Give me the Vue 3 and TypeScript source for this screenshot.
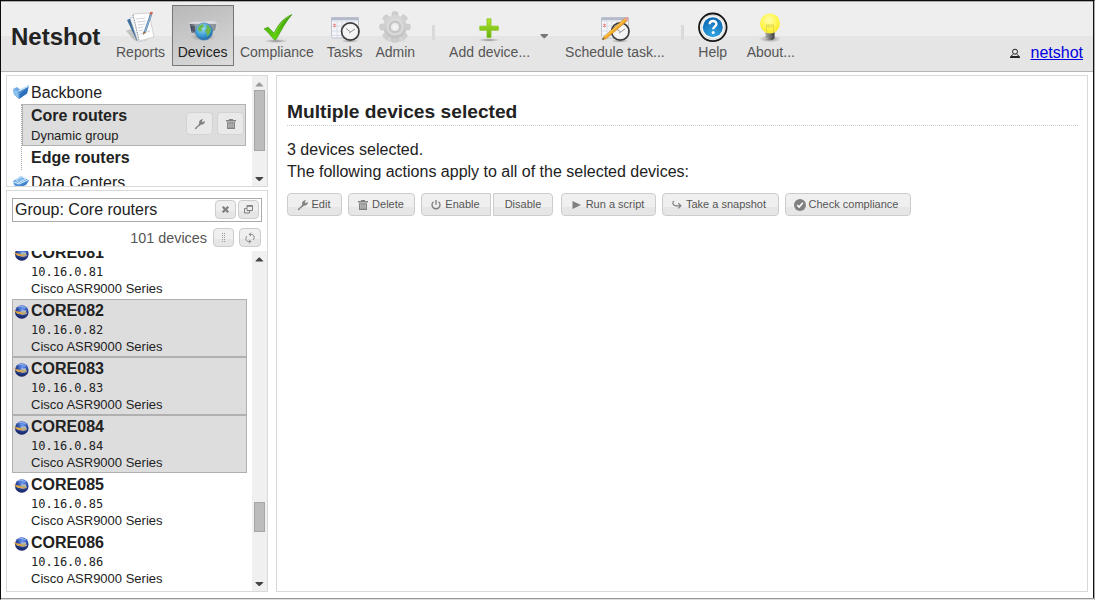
<script setup lang="ts">
interface Device { name: string; ip: string; model: string; selected: boolean }

const devices: Device[] = [81, 82, 83, 84, 85, 86].map((n) => ({
  name: `CORE0${n}`,
  ip: `10.16.0.${n}`,
  model: 'Cisco ASR9000 Series',
  selected: n >= 82 && n <= 84,
}))

const glyphs: Record<string, string> = {
  wrench: 'M1 10 L5.2 6 C4.6 3.3 6.4 1 9 1.3 L7.7 3.2 L8.8 4.2 L10.8 2.8 C11.3 5.2 9.2 7.1 6.9 6.6 L5.7 8 L4.6 8 L4.4 9.2 L3.2 9.2 L2.6 10.8 C1.6 11.6 .5 10.9 1 10Z',
  trash: 'M4 1H8V2H11V3.4H1V2H4ZM2 4.2H10V11H2ZM3.5 5.3V9.8H4.3V5.3ZM5.6 5.3V9.8H6.4V5.3ZM7.7 5.3V9.8H8.5V5.3Z',
  play: 'M1.5 2 L10 6 L1.5 10Z',
}

const actions = [
  { cls: 'edit', label: 'Edit', icon: 'wrench' },
  { cls: 'delete', label: 'Delete', icon: 'trash' },
  { cls: 'enable', label: 'Enable', icon: 'power' },
  { cls: 'disable', label: 'Disable', icon: '' },
  { cls: 'run', label: 'Run a script', icon: 'play' },
  { cls: 'snapshot', label: 'Take a snapshot', icon: 'arrow' },
  { cls: 'check', label: 'Check compliance', icon: 'check' },
]

const tools = [
  { id: 'reports', label: 'Reports' },
  { id: 'devices', label: 'Devices' },
  { id: 'compliance', label: 'Compliance' },
  { id: 'tasks', label: 'Tasks' },
  { id: 'admin', label: 'Admin' },
  { id: 'add', label: 'Add device...' },
  { id: 'schedule', label: 'Schedule task...' },
  { id: 'help', label: 'Help' },
  { id: 'about', label: 'About...' },
]
const teeth = [0, 45, 90, 135, 180, 225, 270, 315]
</script>

<template>
  <div class="window">
    <svg class="defs" width="0" height="0">
      <defs>
        <linearGradient id="gGreen" x1="0" y1="0" x2="0" y2="1"><stop offset="0" stop-color="#b4e62a" /><stop offset="1" stop-color="#63b010" /></linearGradient>
        <linearGradient id="gTick" x1="0" y1="0" x2="0" y2="1"><stop offset="0" stop-color="#3f9a06" /><stop offset="1" stop-color="#62d60c" /></linearGradient>
        <linearGradient id="gGear" x1="0" y1="0" x2="0" y2="1"><stop offset="0" stop-color="#d8d8d8" /><stop offset="1" stop-color="#c2c2c2" /></linearGradient>
        <linearGradient id="gFold" x1="0" y1="0" x2="1" y2="1"><stop offset="0" stop-color="#8cc4f4" /><stop offset="1" stop-color="#1c63b8" /></linearGradient>
        <linearGradient id="gBox" x1="0" y1="0" x2="1" y2="0"><stop offset="0" stop-color="#4e5664" /><stop offset=".3" stop-color="#a8adb5" /><stop offset="1" stop-color="#8b8f96" /></linearGradient>
        <radialGradient id="gGlobe" cx=".4" cy=".3" r=".7"><stop offset="0" stop-color="#a4e0f6" /><stop offset=".6" stop-color="#3f9fd8" /><stop offset="1" stop-color="#1f6aa8" /></radialGradient>
        <radialGradient id="gHelp" cx=".5" cy=".9" r=".9"><stop offset="0" stop-color="#35a8e4" /><stop offset="1" stop-color="#0b65ae" /></radialGradient>
        <radialGradient id="gBulb" cx=".45" cy=".35" r=".65"><stop offset="0" stop-color="#fffcae" /><stop offset=".65" stop-color="#fff64b" /><stop offset="1" stop-color="#f8e82a" /></radialGradient>
        <linearGradient id="gBase" x1="0" y1="0" x2="1" y2="0"><stop offset="0" stop-color="#b9b9b3" /><stop offset="1" stop-color="#303030" /></linearGradient>
        <radialGradient id="gOrb" cx=".55" cy=".25" r=".75"><stop offset="0" stop-color="#6f9ff5" /><stop offset=".5" stop-color="#2c4da8" /><stop offset="1" stop-color="#15205a" /></radialGradient>
        <radialGradient id="gShade"><stop offset="0" stop-color="#555" stop-opacity=".65" /><stop offset="1" stop-color="#777" stop-opacity="0" /></radialGradient>
      </defs>
    </svg>

    <header class="toolbar">
      <h1>Netshot</h1>
      <template v-for="t in tools" :key="t.id">
        <span v-if="t.id === 'add' || t.id === 'help'" class="divider" :class="'before-' + t.id"></span>
        <a class="tool" :class="[t.id, { active: t.id === 'devices' }]">
          <svg width="32" height="32" viewBox="0 0 32 32">
            <g v-if="t.id === 'reports'">
              <path d="M1 20L8 17L15 31L9 29Z" fill="#999" opacity=".5" />
              <path d="M2 9L9 6L15 29L12 30Z" fill="#3b6c99" />
              <path d="M5 7L16 4L22 29L13 31Z" fill="#f5f5f5" stroke="#b7bfc8" stroke-width=".6" />
              <path d="M8 3L24 2L29 26L14 30Z" fill="#fdfdfd" stroke="#c4c4c4" stroke-width=".7" />
              <path d="M11 8L20 7M12 11L21 10M13 14L20 13M13 17L18 16M14 20L18 19M15 23L25 20" stroke="#cdd0d5" stroke-width=".9" />
              <path d="M8 4L14 29" stroke="#82909f" stroke-width="1" stroke-dasharray="1 1.5" />
              <path d="M25 3L18 23L21 21L27 4Z" fill="#527fa8" /><path d="M26 4L19.5 22" stroke="#b0d0ea" stroke-width=".7" />
              <path d="M24.5 3L25.5 .8L28 1.3L27 4Z" fill="#c66851" /><path d="M18.5 20.5L18 24L21 21.5Z" fill="#9a6d40" />
            </g>
            <g v-else-if="t.id === 'devices'">
              <ellipse cx="16" cy="26" rx="13" ry="4" fill="url(#gShade)" />
              <path d="M4 11L27 10L30 12.5L2 13.5Z" fill="#dcdee1" />
              <path d="M2 12.5L30 12.5L28.5 20L14 25L4 22Z" fill="url(#gBox)" stroke="#e3e4e7" stroke-width=".7" />
              <path d="M5 15V20M7 15V21" stroke="#252c45" stroke-width="1" />
              <circle cx="17" cy="20.5" r="8.6" fill="url(#gGlobe)" stroke="#447ca9" stroke-width=".6" />
              <path d="M12 15L16 13L17 15.5L14.5 17.5L15 20L12.5 20.5L10.5 18.5ZM19 14L22 15L24 18L23 22L20.5 26L19.5 22L18 20L20 17Z" fill="#6cb84a" />
            </g>
            <g v-else-if="t.id === 'compliance'">
              <ellipse cx="15" cy="30" rx="12" ry="2" fill="url(#gShade)" />
              <path d="M3 18L7 16L13 22C17 14 22 7 31 3.5C24.5 11 20.5 19 15.5 28Q14 29.5 12.5 28C9 24 6 20 3 18Z" fill="url(#gTick)" stroke="#338d08" stroke-width=".5" />
              <path d="M28 5C20 11 17 17 13.3 23" stroke="#8ade47" stroke-width=".8" fill="none" />
            </g>
            <g v-else-if="t.id === 'tasks' || t.id === 'schedule'">
              <rect x="2.5" y="7" width="27" height="20" rx="1.5" fill="#f4f5f9" stroke="#bec3ce" />
              <path d="M2.2 6.2H29.8V9.2H2.2Z" fill="#b4bac9" />
              <path d="M3 10H29M3 15H29M3 20H28M3 24.5H20M8 10V27M13 10V27M18 10V26M23 10V23" stroke="#d3d8e4" stroke-width=".8" />
              <path d="M4 13L7 16M7 13L4 16M5.5 12.5V16.5" stroke="#f08078" stroke-width=".8" />
              <ellipse cx="21" cy="30" rx="9" ry="1.7" fill="url(#gShade)" />
              <circle cx="21.3" cy="20.5" r="8.7" fill="#f5f5f5" stroke="#3d3d3d" stroke-width="1.7" />
              <circle cx="21.3" cy="20.5" r="7.2" fill="none" stroke="#c2c2c2" stroke-width=".7" stroke-dasharray=".7 3" />
              <path d="M17 17.5L21.5 21L26 18M21.5 21L20 22.2" stroke="#777" stroke-width=".8" fill="none" />
              <template v-if="t.id === 'schedule'">
                <path d="M3 29L5 25.5L25.5 7.5L28 10L7.5 27.6Z" fill="#f2a929" stroke="#b97812" stroke-width=".5" />
                <path d="M6 25.5L26 8.5" stroke="#ffd468" stroke-width=".9" />
                <path d="M25.2 7.7L27 6Q30 6 29.5 9L28 10Z" fill="#e9a195" /><path d="M3 29L4.3 26.5L5.7 28Z" fill="#665" />
              </template>
            </g>
            <g v-else-if="t.id === 'admin'">
              <ellipse cx="16" cy="29" rx="12" ry="3" fill="url(#gShade)" opacity=".4" />
              <rect v-for="a in teeth" :key="a" x="13" y=".8" width="6" height="8" rx="1.7" fill="#cfcfcf" stroke="#bdbdbd" stroke-width=".5" :transform="`rotate(${a} 16 16)`" />
              <circle cx="16" cy="16" r="11.8" fill="url(#gGear)" />
              <circle cx="16" cy="16" r="7.6" fill="#cacaca" stroke="#dedede" stroke-width="1.5" />
              <circle cx="16" cy="16" r="4.8" fill="#e7e7e7" stroke="#b8b8b8" stroke-width=".8" /><circle cx="16" cy="16" r="2.7" fill="#f2f2f2" />
            </g>
            <g v-else-if="t.id === 'add'">
              <ellipse cx="15" cy="29" rx="11" ry="1.8" fill="url(#gShade)" />
              <path d="M13 7.8H17V15.2H24.3V19.2H17V26.5H13V19.2H5.8V15.2H13Z" fill="url(#gGreen)" stroke="#83c61a" stroke-width=".8" />
            </g>
            <g v-else-if="t.id === 'help'">
              <circle cx="15.8" cy="16.3" r="13.8" fill="#fafafa" stroke="#161616" stroke-width="1.8" />
              <circle cx="15.8" cy="16.3" r="12" fill="none" stroke="#ccc" stroke-width=".8" />
              <circle cx="15.8" cy="16.3" r="10" fill="url(#gHelp)" />
              <path d="M12.7 13.2C12.7 9 19.4 9 19.4 13C19.4 15.7 16.2 15.5 16.2 18.2" fill="none" stroke="#fff" stroke-width="2.4" /><circle cx="16.2" cy="21.4" r="1.5" fill="#fff" />
            </g>
            <g v-else>
              <ellipse cx="15" cy="28" rx="11" ry="3.6" fill="url(#gShade)" />
              <path d="M10.5 20H19.5V27Q18 30 12.5 29L10.5 27Z" fill="url(#gBase)" />
              <path d="M10.5 23H19.5M10.5 25.5H19.5" stroke="#777" stroke-width=".6" />
              <circle cx="15" cy="12.4" r="10" fill="url(#gBulb)" />
              <path d="M11.5 21V14H18.5V21M13 14V16H17V14" fill="none" stroke="#d4cb46" stroke-width=".7" />
            </g>
          </svg>
          <span class="label">{{ t.label }}</span>
        </a>
        <svg v-if="t.id === 'add'" class="caret" width="9" height="5" viewBox="0 0 9 5"><path d="M.5 0H8V1L4.8 4.2H3.8L.5 1Z" fill="#777" /></svg>
      </template>
      <div class="user">
        <svg width="12" height="12" viewBox="0 0 12 12"><circle cx="6" cy="4.7" r="2.5" fill="none" stroke="#222" stroke-width="1" /><path d="M2 9L4.3 7.3M10 9L7.7 7.3" stroke="#222" stroke-width=".9" /><path d="M1 11V9.5L2.5 8.9H9.5L11 9.5V11Z" fill="#222" /></svg>
        <a class="account">netshot</a>
      </div>
    </header>

    <div class="body">
      <aside>
        <section class="panel groups">
          <div class="tree">
            <div class="folder">
              <svg width="17" height="16" viewBox="0 0 17 16"><path d="M0 5L4 3L7 5.5L16 1L14 9.5L6 15L1 10.5Z" fill="url(#gFold)" /><path d="M0 5.2L5 7L6 14.5L1 10.5Z" fill="#8ac0ee" /><path d="M5.5 7L15.5 1.8" stroke="#d8edfc" stroke-width="1.3" fill="none" /><path d="M7 9.5L15.5 3L14 9.5L6.5 14.5Z" fill="#2467b4" opacity=".75" /></svg>
              <span>Backbone</span>
            </div>
            <div class="children">
              <div class="group selected">
                <div><b>Core routers</b><small>Dynamic group</small></div>
                <span class="row-actions">
                  <button><svg width="12" height="12" viewBox="0 0 12 12"><path :d="glyphs.wrench" /></svg></button>
                  <button><svg width="12" height="12" viewBox="0 0 12 12"><path :d="glyphs.trash" fill-rule="evenodd" /></svg></button>
                </span>
              </div>
              <div class="group plain"><b>Edge routers</b></div>
            </div>
            <div class="folder second">
              <svg width="17" height="16" viewBox="0 0 17 16"><path d="M0 7L8 2L16 6.5L13 11L5 14L1 11Z" fill="url(#gFold)" /><path d="M3 5.5L9 2.5L13 5L5.5 8.5ZM1 8L6 10L15 6" stroke="#d5ebfd" stroke-width="1" fill="#83b9eb" /></svg>
              <span>Data Centers</span>
            </div>
          </div>
          <div class="scroll">
            <svg width="9" height="5" viewBox="0 0 9 5"><path d="M.5 4.5H8.2V4L4.8 .6H3.8L.5 4Z" fill="#999" /></svg>
            <i class="thumb top-thumb"></i>
            <svg class="down" width="9" height="5" viewBox="0 0 9 5"><path d="M.5 0H8.2V.8L4.8 4H3.8L.5 .8Z" fill="#444" /></svg>
          </div>
        </section>

        <section class="panel list-panel">
          <div class="search">
            <span>Group: Core routers</span>
            <button><svg width="9" height="9" viewBox="0 0 9 9"><path d="M1.7 1.7L7.3 7.3M7.3 1.7L1.7 7.3" stroke="#808080" stroke-width="2.3" /></svg></button>
            <button><svg width="11" height="9" viewBox="0 0 11 9"><path d="M4 .5H9.5V5.5H4ZM3.5 3.5H1.5V8H6.5V6M4 1.3H9.5" fill="none" stroke="#808080" stroke-width="1" /></svg></button>
          </div>
          <div class="count">
            <span>101 devices</span>
            <button><svg width="5" height="10" viewBox="0 0 5 10" shape-rendering="crispEdges"><path d="M1.5 0V9M3.5 0V9" stroke="#999" stroke-width="1" stroke-dasharray="1 1" /></svg></button>
            <button><svg width="12" height="12" viewBox="0 0 12 12"><path d="M5.5 2.5H7.5C10.2 2.5 11 6 9 8M6.5 9.5H4.5C1.8 9.5 1 6 3 4M7 .7L5.2 2.5L7 4.3M5 7.7L6.8 9.5L5 11.3" fill="none" stroke="#808080" stroke-width="1" /></svg></button>
          </div>
          <div class="viewport">
            <ul>
              <li v-for="d in devices" :key="d.name" :class="{ selected: d.selected }">
                <svg width="16" height="16" viewBox="0 0 16 16"><circle cx="8.8" cy="8" r="6.8" fill="url(#gOrb)" /><path d="M5 3Q9 1 13 4" stroke="#a4c0f5" stroke-width=".8" fill="none" /><path d="M3 8L13 7L14 10L10 11L4 9.5Z" fill="#b6aa82" /><path d="M0 6.5L5 7.5L11 10L5 9.8Z" fill="#e5a43d" /><path d="M8 7H13" stroke="#e5e6e4" stroke-width=".8" /></svg>
                <div><b>{{ d.name }}</b><code>{{ d.ip }}</code><small>{{ d.model }}</small></div>
              </li>
            </ul>
            <div class="scroll">
              <svg width="9" height="5" viewBox="0 0 9 5"><path d="M.5 4.5H8.2V4L4.8 .6H3.8L.5 4Z" fill="#444" /></svg>
              <i class="thumb list-thumb"></i>
              <svg class="down" width="9" height="5" viewBox="0 0 9 5"><path d="M.5 0H8.2V.8L4.8 4H3.8L.5 .8Z" fill="#444" /></svg>
            </div>
          </div>
        </section>
      </aside>

      <main class="panel">
        <h2>Multiple devices selected</h2>
        <p>3 devices selected.<br>The following actions apply to all of the selected devices:</p>
        <div class="actions">
          <button v-for="a in actions" :key="a.label" :class="a.cls">
            <svg v-if="a.icon" width="12" height="12" viewBox="0 0 12 12">
              <g v-if="a.icon === 'power'" fill="none" stroke="#808080" stroke-width="1.4"><path d="M3.5 2.7A4 4 0 1 0 8.5 2.7M6 1V5.8" /></g>
              <g v-else-if="a.icon === 'arrow'" fill="none" stroke="#808080" stroke-width="1.2"><path d="M3 2C1 3 1.5 6.8 5 6.8H9.5M7.3 4.2L9.9 6.8L7.3 9.4" /></g>
              <g v-else-if="a.icon === 'check'"><circle cx="6" cy="6" r="6" fill="#808080" /><path d="M3.2 6.2L5.2 8.1L8.8 3.8" fill="none" stroke="#fff" stroke-width="1.6" /></g>
              <path v-else :d="glyphs[a.icon]" fill-rule="evenodd" />
            </svg>
            <span>{{ a.label }}</span>
          </button>
        </div>
      </main>
    </div>
  </div>
</template>

<style>
body { margin: 0; background: #fff; overflow: hidden; }
</style>

<style scoped>
* { box-sizing: border-box; }
.window { width: 1095px; height: 600px; display: flex; flex-direction: column; border-left: 1px solid #0c0c0c; border-top: 1px solid #0c0c0c; border-right: 1px solid #aaa; font: 16px/18px "Liberation Sans", Arial, sans-serif; color: #222; overflow: hidden; box-shadow: inset -1px 0 #111; border-bottom: 1px solid #ddd; position: relative; }
.defs { position: absolute; }
svg { display: block; flex: none; }
.toolbar { height: 71px; flex: none; margin-right: 1px; display: flex; align-items: flex-start; background: linear-gradient(#eee 34px, #e5e5e5 34px); border-top: 1px solid #aaa; border-bottom: 1px solid #b5b5b5; }
h1 { margin: 21px 0 0 10px; width: 99px; font-size: 24px; line-height: 28px; }
.tool { height: 61px; margin-top: 3px; padding: 5px 5px 0; border: 1px solid transparent; display: flex; flex-direction: column; align-items: center; font-size: 14px; line-height: 16px; color: #555; white-space: nowrap; }
.label { margin-top: 1px; }
.active { color: #222; background: linear-gradient(160deg, #b8b8b8, #dcdcdc); border-color: #777; }
.devices { margin-left: .7px; }
.compliance { margin-left: .4px; }
.tasks, .admin { margin-left: .9px; }
.divider { width: 3px; height: 15px; margin-top: 23px; background: #dadada; }
.before-add { margin-left: 11px; margin-right: 8px; }
.before-help { margin-left: 10px; margin-right: 7px; }
.caret { margin-top: 32px; margin-left: 4px; margin-right: 10px; }
.about { margin-left: 6px; }
.user { margin: 42px 10px 0 auto; display: flex; align-items: center; gap: 10px; }
.account { color: #0000e0; text-decoration: underline; }
.body { flex: 1; min-height: 0; display: flex; gap: 8px; padding: 3px 6px 6px 5px; border-bottom: 1px solid #999; }
aside { width: 262px; display: flex; flex-direction: column; gap: 3px; }
.panel { background: #fff; border: 1px solid #d9d9d9; }
.groups { height: 112px; display: flex; overflow: hidden; }
.tree { width: 245px; padding-top: 8px; }
.folder { display: flex; padding-left: 6px; gap: 1px; height: 20px; }
.folder span { line-height: 18px; }
.children { margin-left: 14px; border-left: 1px dotted #aaa; height: 66px; }
.group { width: 224px; height: 42px; padding: 2px 0 0 8px; border: 1px solid #b2b2b2; display: flex; justify-content: space-between; }
.group.plain { border: 0; padding: 3px 0 0 9px; height: 24px; }
.selected { background: #ddd; }
b, small, code { display: block; }
small { font-size: 13px; line-height: 17px; }
.group small { margin-top: 2px; }
.row-actions { display: flex; gap: 4px; padding: 5px 1px 0 0; }
.second { padding-top: 4px; height: 30px; }
.scroll { width: 15px; flex: none; background: #f0f0f0; display: flex; flex-direction: column; align-items: center; padding: 6px 0 4px; }
.thumb { width: 11px; background: #bcbcbc; border: 1px solid #a6a6a6; flex: none; }
.top-thumb { height: 61px; margin-top: 3px; }
.list-thumb { height: 30px; margin-top: 240px; }
.down { margin-top: auto; }
button { font: 11px/13px "Liberation Sans", Arial, sans-serif; color: #555; background: linear-gradient(#efefef 60%, #e6e6e6 60%); border: 1px solid #ccc; border-radius: 4px; padding: 0; display: flex; align-items: center; justify-content: center; fill: #808080; white-space: nowrap; }
.row-actions button { width: 27px; height: 23px; border-color: #d3d3d3; background: #e9e9e9; }
.list-panel { flex: 1; min-height: 0; display: flex; flex-direction: column; }
.search { margin: 7px 0 0 5px; width: 250px; height: 24px; flex: none; border: 1px solid #aaa; display: flex; align-items: flex-start; padding: 1px 2px 0; gap: 2px; }
.search span { flex: 1; line-height: 19px; }
.search button, .count button { width: 21px; height: 19px; }
.count { height: 29px; flex: none; display: flex; justify-content: flex-end; padding: 6px 6px 0 0; }
.count span { font-size: 14.4px; line-height: 21px; color: #555; margin-right: 6px; }
.count button + button { margin-left: 5px; width: 22px; }
.viewport { flex: 1; min-height: 0; display: flex; overflow: hidden; }
ul { list-style: none; margin: -10px 5px 0; padding: 0; width: 235px; }
li { height: 58px; border: 1px solid transparent; display: flex; gap: 2px; }
li.selected { border-color: #b0b0b0; }
li svg { margin-top: 4px; }
li b { margin-top: 2px; height: 19px; }
li code { position: relative; top: 1px; font: 12px/17px "DejaVu Sans Mono", monospace; }
main { flex: 1; padding: 25px 9px 0 10px; }
h2 { margin: 0; height: 25px; font-size: 19.2px; line-height: 22px; border-bottom: 1px dotted #ccc; }
p { margin: 13px 0 0; line-height: 22px; }
.actions { display: flex; margin-top: 10px; }
.actions button { height: 23px; gap: 3px; margin-right: 6px; padding-right: 2px; }
.actions .edit { width: 55px; }
.actions .delete { width: 67px; }
.actions .enable { width: 70px; margin-right: 2px; border-radius: 4px 0 0 4px; }
.actions .disable { width: 60px; margin-right: 8px; padding-right: 0; border-radius: 0 4px 4px 0; }
.actions .run { width: 95px; }
.actions .snapshot { width: 117px; padding-right: 4px; }
.actions .check { width: 126px; padding-right: 4px; }
</style>
